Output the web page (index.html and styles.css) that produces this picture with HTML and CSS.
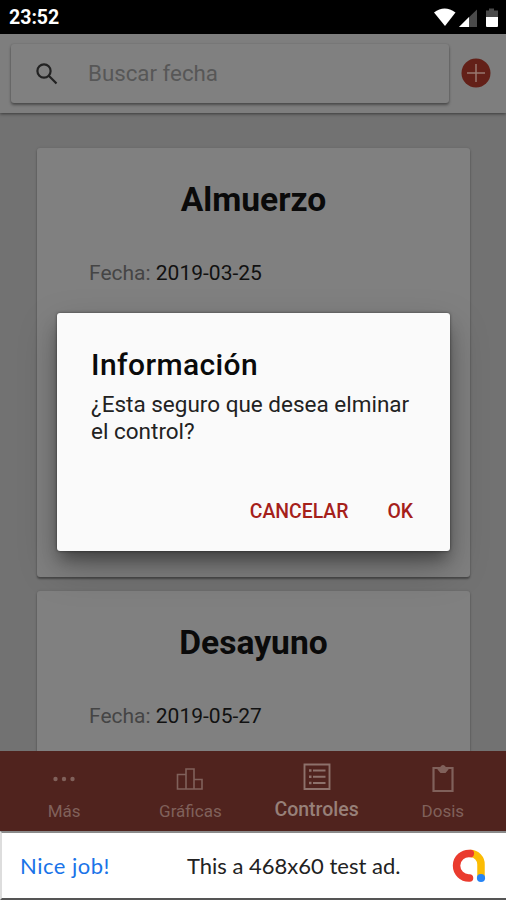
FILE: index.html
```html
<!DOCTYPE html>
<html lang="es">
<head>
  <meta charset="UTF-8" />
  <meta name="viewport" content="width=device-width, initial-scale=1.0" />
  <title>Controles</title>
  <link rel="stylesheet" href="styles.css">
</head>
<body>
  <div class="status-bar">
    <span class="clock">23:52</span>
    <svg class="status-icons" width="66" height="22" viewBox="0 0 66 22">
      <path d="M1 5.500Q11.500 -2.500 22.500 5.500L12 19z" fill="#fff" />
      <path d="M44 2.500v17.500H26z" fill="#4a4a4a" />
      <path d="M36 10v10H26z" fill="#fff" />
      <path d="M53 3.500h3V1.500h5v2h4V10H53z" fill="#4a4a4a" />
      <path d="M53 10h12v9a1 1 0 0 1-1 1H54a1 1 0 0 1-1-1z" fill="#fff" />
    </svg>
  </div>

  <header class="toolbar">
    <div class="search-box">
      <svg width="24" height="24" viewBox="0 0 24 24" fill="none" stroke="#222" stroke-width="2.200">
        <circle cx="9" cy="9" r="6.600" />
        <path d="M13.800 13.800l7.700 7.700" />
      </svg>
      <span class="placeholder">Buscar fecha</span>
    </div>
    <svg class="add-btn" width="30" height="30" viewBox="0 0 30 30">
      <circle cx="15" cy="15" r="14.500" fill="#632018" />
      <path d="M15 6v18M6 15h18" stroke="#98776f" stroke-width="1.500" />
    </svg>
  </header>

  <main class="content">
    <section class="card">
      <h2>Almuerzo</h2>
      <p class="fecha">Fecha: <span>2019-03-25</span></p>
    </section>
    <section class="card">
      <h2>Desayuno</h2>
      <p class="fecha">Fecha: <span>2019-05-27</span></p>
    </section>
  </main>

  <nav class="tabs">
    <a class="tab">
      <svg width="30" height="30" viewBox="0 0 30 30" fill="#80615b">
        <circle cx="6.500" cy="16" r="2.200" /><circle cx="15" cy="16" r="2.200" /><circle cx="23.500" cy="16" r="2.200" />
      </svg>
      <span>Más</span>
    </a>
    <a class="tab">
      <svg width="30" height="30" viewBox="0 0 30 30" fill="none" stroke="#80615b" stroke-width="1.600">
        <path d="M2.500 26V11.500H11V6h8v10.500h8V26zM11 11.500V26M19 16.500V26" />
      </svg>
      <span>Gráficas</span>
    </a>
    <a class="tab active">
      <svg width="30" height="30" viewBox="0 0 30 30" fill="none" stroke="#8d716b" stroke-width="1.900">
        <path d="M2.500 1.500h25V26h-25z" />
        <path d="M11 7.500h12.500M11 13.700h12.500M11 20h12.500" />
        <path d="M7 7.500h2.500M7 13.700h2.500M7 20h2.500" stroke-width="2.600" />
      </svg>
      <span>Controles</span>
    </a>
    <a class="tab">
      <svg width="30" height="30" viewBox="0 0 30 30" fill="none" stroke="#80615b" stroke-width="2.200">
        <path d="M5.500 5h19v23h-19z" />
        <path d="M9.500 5q3 0 3.500-2 2-2 4 0 .500 2 3.500 2v1.500l-3 3.500h-5l-3-3.500z" fill="#80615b" stroke="none" />
      </svg>
      <span>Dosis</span>
    </a>
  </nav>

  <div class="ad">
    <span class="ad-tag">Nice job!</span>
    <span class="ad-text">This a 468x60 test ad.</span>
    <svg class="ad-logo" width="34" height="34" viewBox="0 0 34 34" fill="none" stroke-width="7.500" stroke-linecap="round">
      <path d="M18.500 4.500A10.700 10.700 0 0 1 29 15.500V28" stroke="#fbbc04" />
      <path d="M18.300 4.500A12.300 12.300 0 1 0 17.500 29" stroke="#ea3b2e" />
      <circle cx="29" cy="29" r="4.100" fill="#2684f5" />
    </svg>
  </div>

  <div class="dialog">
    <h3>Información</h3>
    <p>¿Esta seguro que desea elminar<br>el control?</p>
    <div class="actions">
      <button class="cancel">CANCELAR</button>
      <button class="ok">OK</button>
    </div>
  </div>
</body>
</html>
```
FILE: styles.css
```css
* {
  box-sizing: border-box;
}
body {
  margin: 0;
  width: 506px;
  height: 900px;
  overflow: hidden;
  position: relative;
  display: flex;
  flex-direction: column;
  background-color: #727272;
  font-family: Roboto, sans-serif;
  color: #0a0a0a;
}
h2, h3, p {
  margin: 0;
}
.status-bar {
  height: 34px;
  background: #000;
  display: flex;
  justify-content: space-between;
  align-items: center;
  padding: 1px 7px 0 9px;
}
.clock {
  color: #fff;
  font-size: 19.5px;
  font-weight: 700;
}
.toolbar {
  height: 79px;
  flex-shrink: 0;
  background: #7e7e7e;
  box-shadow: 0 1px 3px rgba(0, 0, 0, 0.5);
  display: flex;
  align-items: center;
  padding-left: 11px;
  position: relative;
}
.search-box {
  width: 438px;
  height: 59px;
  border-radius: 3px;
  background: #808080;
  box-shadow: 0 2px 3px rgba(0, 0, 0, 0.4), 0 0 2px rgba(0, 0, 0, 0.15);
  display: flex;
  align-items: center;
  padding-left: 24px;
}
.placeholder {
  margin: -2px 0 0 29px;
  font-size: 22.3px;
  color: #575757;
}
.add-btn {
  margin: -2px 0 0 12px;
}
.content {
  flex: 1;
  min-height: 0;
  overflow: hidden;
  padding: 35px 36px 0 37px;
  display: flex;
  flex-direction: column;
  gap: 14px;
}
.card {
  flex-shrink: 0;
  height: 429px;
  border-radius: 3px;
  background: #808080;
  box-shadow: 0 2px 2px rgba(0, 0, 0, 0.35), 0 0 3px rgba(0, 0, 0, 0.12);
  padding: 31px 52px;
}
.card h2 {
  text-align: center;
  font-size: 33.6px;
  line-height: 42px;
  font-weight: 700;
}
.fecha {
  margin-top: 38px;
  font-size: 21px;
  line-height: 28px;
  color: #454545;
}
.fecha span {
  color: #111;
}
.tabs {
  height: 80px;
  flex-shrink: 0;
  background: #50231e;
  display: flex;
  padding-left: 1px;
}
.tab {
  flex: 1;
  display: flex;
  flex-direction: column;
  align-items: center;
  padding-top: 12px;
  font-size: 17px;
  line-height: 24px;
  color: #80615b;
}
.tab span {
  margin-top: 6px;
}
.tab.active {
  font-size: 19.5px;
  color: #978079;
  font-weight: 500;
}
.tab.active span {
  margin-top: 5px;
}
.ad {
  height: 69px;
  flex-shrink: 0;
  background: #fff;
  border-top: 2px solid #8a8a8a;
  border-bottom: 2px solid #555;
  border-left: 2px solid #ddd;
  display: flex;
  align-items: center;
  font-family: Lato, sans-serif;
  font-size: 22px;
}
.ad-tag {
  margin-left: 18px;
  width: 167px;
  color: #1a73e8;
  letter-spacing: 0.5px;
}
.ad-text {
  width: 265px;
  color: #222;
  white-space: nowrap;
}
.dialog {
  position: absolute;
  left: 57px;
  top: 313px;
  width: 393px;
  height: 238px;
  border-radius: 3px;
  background: #fafafa;
  box-shadow: 0 11px 15px -3px rgba(0, 0, 0, 0.35), 0 16px 38px rgba(0, 0, 0, 0.25), 0 0 3px rgba(0, 0, 0, 0.5);
  padding: 34px 24px 0 34px;
  display: flex;
  flex-direction: column;
}
.dialog h3 {
  font-size: 30px;
  line-height: 36px;
  font-weight: 500;
  letter-spacing: 0.4px;
}
.dialog p {
  margin-top: 8px;
  font-size: 22.5px;
  line-height: 26.5px;
  color: #222;
  white-space: nowrap;
}
.actions {
  display: flex;
  justify-content: flex-end;
  margin-top: 53px;
}
.actions button {
  border: 0;
  background: none;
  padding: 0 13px;
  font-family: inherit;
  font-size: 19.4px;
  line-height: 30px;
  font-weight: 500;
  color: #a5201a;
}
.actions .ok {
  margin-left: 13px;
}
```
